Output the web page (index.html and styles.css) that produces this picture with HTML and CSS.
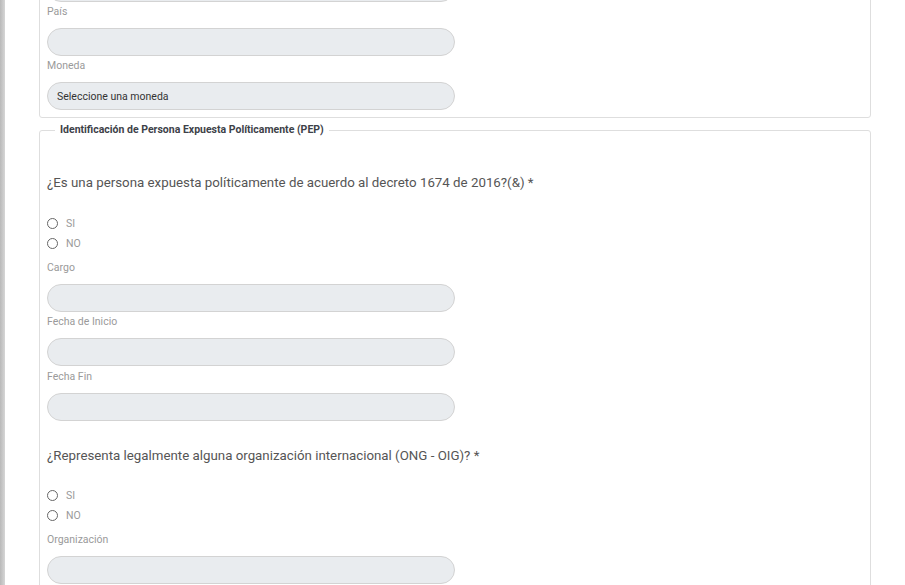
FILE: index.html
```html
<!DOCTYPE html>
<html lang="es">
<head>
<meta charset="utf-8">
<link rel="stylesheet" href="styles.css">
</head>
<body>
<div class="layout">
  <div class="side"></div>
  <main class="main">
    <form class="form">
      <fieldset class="box first">
        <div class="inp"></div>
        <label class="lbl">País</label>
        <div class="inp"></div>
        <label class="lbl">Moneda</label>
        <div class="inp sel">Seleccione una moneda</div>
      </fieldset>
      <fieldset class="box second">
        <legend class="legend">Identificación de Persona Expuesta Políticamente (PEP)</legend>
        <p class="q q1">¿Es una persona expuesta políticamente de acuerdo al decreto 1674 de 2016?(&amp;) *</p>
        <div class="radios">
          <div class="radio"><span class="dot"></span><span>SI</span></div>
          <div class="radio"><span class="dot"></span><span>NO</span></div>
        </div>
        <label class="lbl lbl-after-radio">Cargo</label>
        <div class="inp"></div>
        <label class="lbl">Fecha de Inicio</label>
        <div class="inp"></div>
        <label class="lbl lbl-wide">Fecha Fin</label>
        <div class="inp"></div>
        <p class="q q2">¿Representa legalmente alguna organización internacional (ONG - OIG)? *</p>
        <div class="radios radios-tight">
          <div class="radio"><span class="dot"></span><span>SI</span></div>
          <div class="radio"><span class="dot"></span><span>NO</span></div>
        </div>
        <label class="lbl lbl-after-radio">Organización</label>
        <div class="inp"></div>
      </fieldset>
    </form>
  </main>
</div>
</body>
</html>
```
FILE: styles.css
```css
html, body {
  margin: 0;
  padding: 0;
  background: #ffffff;
  font-family: Roboto, "Liberation Sans", sans-serif;
  overflow: hidden;
}
.layout {
  display: flex;
  min-height: 585px;
}
.side {
  width: 5px;
  flex: none;
  background: linear-gradient(to right, #b9b9b9, #d6d6d6);
}
.main {
  flex: 1;
  padding: 0 34px 0 34px;
}
.form {
  margin-top: -34px;
}
.box {
  border: 1px solid #dedede;
  border-radius: 3px;
  margin: 0;
  padding: 0 7px 0 7px;
  min-width: 0;
}
.first {
  padding-top: 7px;
  padding-bottom: 7px;
}
.second {
  margin-top: 4px;
  padding-bottom: 20px;
}
.legend {
  font-size: 10.5px;
  line-height: 16px;
  font-weight: 700;
  color: #3d4148;
  padding: 0 5px;
  margin-left: 8px;
}
.lbl {
  display: block;
  font-size: 10.5px;
  line-height: 16px;
  color: #9a9a9a;
  margin: 2px 0 8px;
}
.lbl-wide {
  margin-top: 3px;
}
.inp {
  box-sizing: border-box;
  width: 408px;
  height: 28px;
  border: 1px solid #d3d3d3;
  border-radius: 14px;
  background: #e9ecef;
  font-size: 10.5px;
  color: #333;
  display: flex;
  align-items: center;
  padding-left: 9px;
}
.q {
  margin: 0;
  font-size: 13.3px;
  line-height: 20px;
  color: #555;
}
.q1 {
  margin-top: 35px;
}
.q2 {
  margin-top: 25px;
}
.radios {
  display: flex;
  flex-direction: column;
  margin-top: 20px;
}
.radios-tight {
  margin-top: 19px;
}
.radio {
  display: flex;
  align-items: center;
  height: 20px;
  font-size: 10.5px;
  color: #9a9a9a;
  gap: 8px;
}
.dot {
  box-sizing: border-box;
  width: 11px;
  height: 11px;
  border: 1px solid #666;
  border-radius: 50%;
  background: #fff;
}
.lbl-after-radio {
  margin-top: 7px;
}
```
